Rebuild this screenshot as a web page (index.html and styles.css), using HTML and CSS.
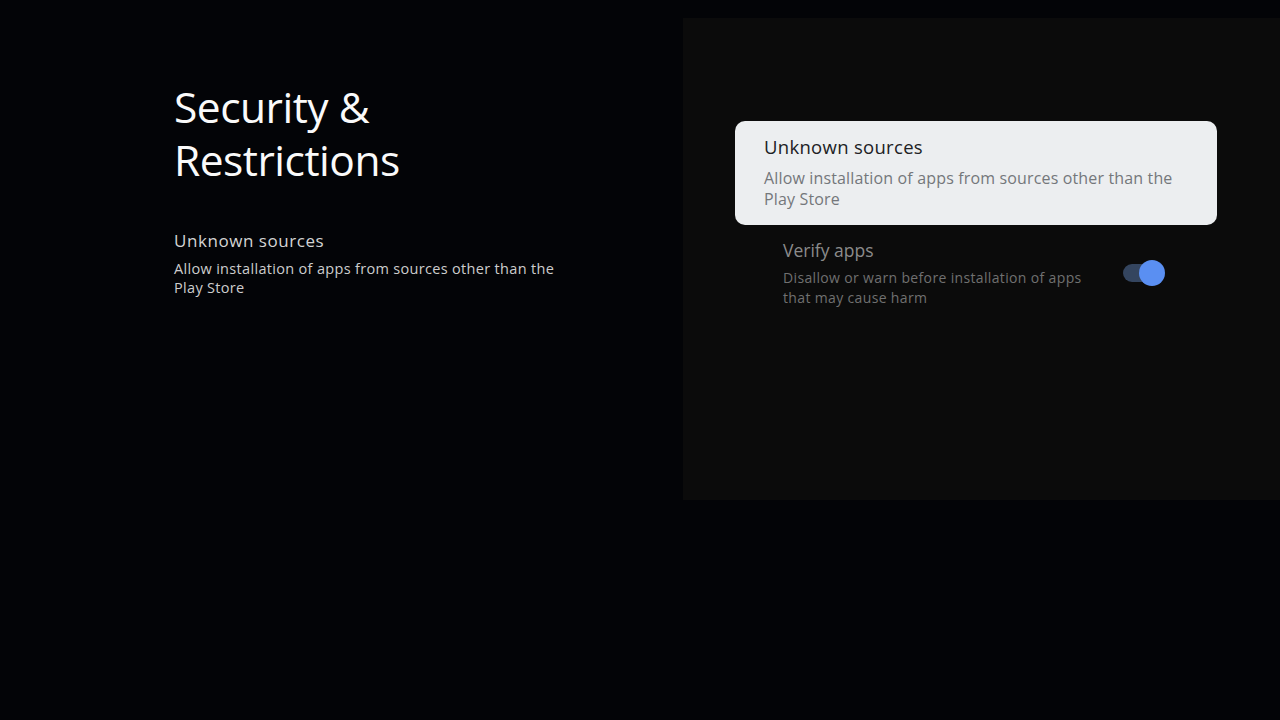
FILE: index.html
```html
<!DOCTYPE html>
<html lang="en">
<head>
  <meta charset="UTF-8" />
  <title>Security &amp; Restrictions</title>
  <link rel="stylesheet" href="styles.css">
</head>
<body>
  <div class="screen">
    <section class="intro">
      <h1>Security &amp;<br>Restrictions</h1>
      <div class="intro-item">
        <div class="intro-title">Unknown sources</div>
        <div class="intro-desc">Allow installation of apps from sources other than the Play Store</div>
      </div>
    </section>

    <section class="panel">
      <div class="pref focused">
        <div class="pref-text">
          <div class="pref-title">Unknown sources</div>
          <div class="pref-desc">Allow installation of apps from sources other than the Play Store</div>
        </div>
      </div>

      <div class="pref switch-pref">
        <div class="pref-text">
          <div class="pref-title">Verify apps</div>
          <div class="pref-desc">Disallow or warn before installation of apps that may cause harm</div>
        </div>
        <div class="switch on">
          <span class="track"></span>
          <span class="thumb"></span>
        </div>
      </div>
    </section>
  </div>
</body>
</html>
```

FILE: styles.css
```css
:root {
  --bg: #030407;
  --panel: #0b0b0b;
  --card: #eceef0;
  --accent: #5a8ff2;
}

* {
  box-sizing: border-box;
}

body {
  margin: 0;
  background: var(--bg);
  font-family: 'Open Sans', Roboto, sans-serif;
  color: #fff;
}

.screen {
  display: flex;
  width: 1280px;
  height: 720px;
}

.intro {
  width: 683px;
  padding: 80px 0 0 174px;
}

h1 {
  margin: 0;
  font-size: 42.5px;
  font-weight: 400;
  line-height: 53px;
  letter-spacing: -0.5px;
  color: #fafafa;
}

.intro-item {
  margin-top: 44px;
}

.intro-title {
  font-size: 17px;
  line-height: 22px;
  letter-spacing: 0.55px;
  color: #d4d4d4;
}

.intro-desc {
  width: 400px;
  margin-top: 7px;
  font-size: 14.5px;
  line-height: 19px;
  letter-spacing: 0.32px;
  color: #cdcdcd;
}

.panel {
  flex: 1;
  height: 482px;
  margin-top: 18px;
  padding: 103px 63px 0 52px;
  background: var(--panel);
}

.pref {
  display: flex;
}

.pref.focused {
  padding: 14px 28px 15px 29px;
  border-radius: 10px;
  background: var(--card);
}

.pref-title {
  font-size: 18.5px;
  line-height: 24px;
  letter-spacing: 0.3px;
}

.pref-desc {
  margin-top: 9px;
  font-size: 16px;
  line-height: 21px;
  letter-spacing: 0.15px;
}

.focused .pref-title {
  color: #202124;
}

.focused .pref-desc {
  color: #74777b;
}

.switch-pref {
  margin-top: 14px;
  padding: 0 52px 0 48px;
  justify-content: space-between;
}

.switch-pref .pref-title {
  font-size: 17.5px;
  line-height: 22px;
  letter-spacing: 0;
  color: #8b8b8b;
}

.switch-pref .pref-desc {
  width: 320px;
  margin-top: 7px;
  font-size: 14px;
  line-height: 20px;
  letter-spacing: 0.35px;
  color: #707070;
}

.switch {
  position: relative;
  width: 42px;
  height: 26px;
  margin-top: 21px;
}

.track {
  position: absolute;
  left: 0;
  top: 4px;
  width: 36px;
  height: 18px;
  border-radius: 9px;
  background: #34455f;
}

.thumb {
  position: absolute;
  right: 0;
  top: 0;
  width: 26px;
  height: 26px;
  border-radius: 50%;
  background: var(--accent);
}
```
